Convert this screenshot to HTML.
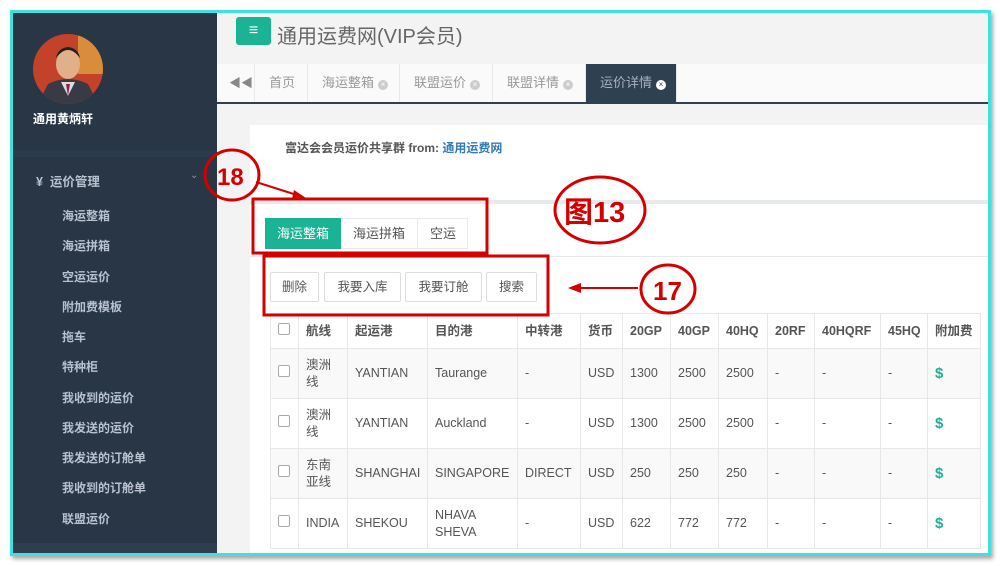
<!DOCTYPE html>
<html><head><meta charset="utf-8"><style>
*{margin:0;padding:0;box-sizing:border-box}
body{width:1000px;height:566px;background:#fff;position:relative;overflow:hidden;font-family:"Liberation Sans","Noto Sans CJK SC",sans-serif;font-size:12px;color:#676a6c}
.a{position:absolute}
.frame{left:10px;top:10px;width:981px;height:546px;border:3px solid #3ee0e0;box-shadow:2px 3px 4px rgba(0,0,0,.35)}
.side{left:13px;top:13px;width:204px;height:540px;background:#283646}
.menu{left:62px;color:#b8c1ce;font-weight:bold;font-size:12px}
.hdr{left:217px;top:13px;width:771px;height:51px;background:#f3f3f4}
.tabs{left:217px;top:64px;width:771px;height:40px;background:#fafafa;border-bottom:2px solid #2f4050}
.tab{position:absolute;top:0;height:38px;line-height:38px;border-right:1px solid #e7eaec;color:#999;font-size:13px;padding-left:14px}
.x{display:inline-block;width:10px;height:10px;border-radius:50%;background:#ccc;margin-left:4px;vertical-align:0px;color:#fff;font-size:8px;line-height:10px;text-align:center}
.content{left:217px;top:104px;width:771px;height:449px;background:#f3f3f4}
.btn{position:absolute;top:272px;height:30px;line-height:28px;border:1px solid #ddd;background:#fff;text-align:center;font-size:12.5px;color:#555;border-radius:2px}
table{border-collapse:collapse;position:absolute;left:270px;top:313px;width:710px;font-size:12.5px;color:#555;table-layout:fixed}
td,th{border:1px solid #e7e7e7;padding:0 7px;text-align:left;line-height:17px;white-space:nowrap;overflow:hidden}
td:nth-child(2){white-space:normal}
th{height:35px;font-weight:bold;color:#555}
tr.r td{height:50px}
tr.g td{background:#f9f9f9}
.cb{display:inline-block;width:12px;height:12px;border:1px solid #aaa;border-radius:2px;background:#fff}
.d{color:#1ab394;font-weight:bold;font-size:15px}
</style></head><body>
<div class="a side"></div>
<svg class="a" style="left:33px;top:34px" width="70" height="70"><defs><clipPath id="c"><circle cx="35" cy="35" r="35"/></clipPath></defs><g clip-path="url(#c)"><rect width="70" height="70" fill="#c4412a"/><rect x="45" y="0" width="25" height="40" fill="#d98c3a"/><path d="M5 70 L15 50 Q35 40 55 50 L65 70Z" fill="#3a3a44"/><path d="M28 48 L35 62 L42 48Z" fill="#ddd"/><path d="M33 50 L35 62 L37 50Z" fill="#8a2350"/><ellipse cx="35" cy="30" rx="12" ry="15" fill="#e0b08a"/><path d="M23 24 Q35 8 47 24 Q45 14 35 13 Q25 14 23 24Z" fill="#222"/></g></svg>
<div class="a" style="left:33px;top:110px;color:#fff;font-weight:bold;font-size:12px">通用黄炳轩</div>
<div class="a" style="left:13px;top:150px;width:204px;height:7px;background:#2c3b4b"></div>
<div class="a" style="left:36px;top:171px;color:#b8c1ce;font-weight:bold;font-size:12.5px">¥&nbsp;&nbsp;运价管理</div>
<div class="a" style="left:190px;top:170px;color:#8a95a5;font-size:10px">⌄</div>
<div class="a menu" style="top:207px">海运整箱</div>
<div class="a menu" style="top:237px">海运拼箱</div>
<div class="a menu" style="top:268px">空运运价</div>
<div class="a menu" style="top:298px">附加费模板</div>
<div class="a menu" style="top:328px">拖车</div>
<div class="a menu" style="top:358px">特种柜</div>
<div class="a menu" style="top:389px">我收到的运价</div>
<div class="a menu" style="top:419px">我发送的运价</div>
<div class="a menu" style="top:449px">我发送的订舱单</div>
<div class="a menu" style="top:479px">我收到的订舱单</div>
<div class="a menu" style="top:510px">联盟运价</div>
<div class="a" style="left:13px;top:543px;width:204px;height:10px;background:#2f3e4e"></div>

<div class="a hdr"></div>
<div class="a" style="left:236px;top:17px;width:35px;height:28px;background:#1ab394;border-radius:3px;color:#fff;text-align:center;line-height:28px;font-size:16px;font-weight:bold">≡</div>
<div class="a" style="left:277px;top:20px;font-size:20px;color:#666">通用运费网(VIP会员)</div>
<div class="a tabs">
<div class="tab" style="left:0;width:38px;padding-left:12px;color:#888;font-size:12px">◀◀</div>
<div class="tab" style="left:38px;width:53px">首页</div>
<div class="tab" style="left:91px;width:92px">海运整箱<span class="x">×</span></div>
<div class="tab" style="left:183px;width:93px">联盟运价<span class="x">×</span></div>
<div class="tab" style="left:276px;width:93px">联盟详情<span class="x">×</span></div>
<div class="tab" style="left:369px;width:91px;background:#2f4050;color:#a7b1c2">运价详情<span class="x" style="background:#fff;color:#2f4050">×</span></div>
</div>
<div class="a content"></div>
<div class="a" style="left:250px;top:125px;width:738px;height:428px;background:#fff"></div>
<div class="a" style="left:285px;top:139px;font-weight:bold;font-size:12px;color:#555">富达会会员运价共享群 from: <span style="color:#337ab7">通用运费网</span></div>
<div class="a" style="left:250px;top:200px;width:738px;height:4px;background:#e7eaec"></div>
<div class="a" style="left:265px;top:218px;width:203px;height:31px;border:1px solid #e7eaec"></div>
<div class="a" style="left:265px;top:218px;width:76px;height:31px;background:#1ab394;color:#fff;text-align:center;line-height:31px;font-size:13px">海运整箱</div>
<div class="a" style="left:341px;top:218px;width:77px;height:31px;border-right:1px solid #e7eaec;text-align:center;line-height:31px;font-size:13px;color:#555">海运拼箱</div>
<div class="a" style="left:418px;top:218px;width:50px;height:31px;text-align:center;line-height:31px;font-size:13px;color:#555">空运</div>
<div class="a" style="left:250px;top:256px;width:738px;height:1px;background:#e7eaec"></div>
<div class="btn" style="left:270px;width:49px">删除</div>
<div class="btn" style="left:324px;width:77px">我要入库</div>
<div class="btn" style="left:405px;width:77px">我要订舱</div>
<div class="btn" style="left:486px;width:51px">搜索</div>
<table>
<colgroup><col style="width:28px"><col style="width:49px"><col style="width:80px"><col style="width:90px"><col style="width:63px"><col style="width:42px"><col style="width:48px"><col style="width:48px"><col style="width:49px"><col style="width:47px"><col style="width:66px"><col style="width:47px"><col style="width:53px"></colgroup>
<tr><th><span class="cb"></span></th><th>航线</th><th>起运港</th><th>目的港</th><th>中转港</th><th>货币</th><th>20GP</th><th>40GP</th><th>40HQ</th><th>20RF</th><th>40HQRF</th><th>45HQ</th><th>附加费</th></tr>
<tr class="r g"><td><span class="cb"></span></td><td>澳洲<br>线</td><td>YANTIAN</td><td>Taurange</td><td>-</td><td>USD</td><td>1300</td><td>2500</td><td>2500</td><td>-</td><td>-</td><td>-</td><td class="d">$</td></tr>
<tr class="r"><td><span class="cb"></span></td><td>澳洲<br>线</td><td>YANTIAN</td><td>Auckland</td><td>-</td><td>USD</td><td>1300</td><td>2500</td><td>2500</td><td>-</td><td>-</td><td>-</td><td class="d">$</td></tr>
<tr class="r g"><td><span class="cb"></span></td><td>东南<br>亚线</td><td>SHANGHAI</td><td>SINGAPORE</td><td>DIRECT</td><td>USD</td><td>250</td><td>250</td><td>250</td><td>-</td><td>-</td><td>-</td><td class="d">$</td></tr>
<tr class="r"><td><span class="cb"></span></td><td>INDIA</td><td>SHEKOU</td><td style="white-space:normal">NHAVA<br>SHEVA</td><td>-</td><td>USD</td><td>622</td><td>772</td><td>772</td><td>-</td><td>-</td><td>-</td><td class="d">$</td></tr>
</table>
<div class="a" style="left:13px;top:553px;width:975px;height:3px;background:#3ee0e0"></div>

<svg class="a" style="left:0;top:0" width="1000" height="566">
<g fill="none" stroke="#d40000" stroke-width="3">
<rect x="253" y="199" width="234" height="54"/>
<rect x="264" y="256" width="284" height="59"/>
<ellipse cx="232" cy="175" rx="27" ry="25"/>
<ellipse cx="600" cy="210" rx="45" ry="33"/>
<ellipse cx="668" cy="289" rx="27" ry="24"/>
<line x1="256" y1="182" x2="300" y2="196" stroke-width="2"/>
<line x1="638" y1="288" x2="578" y2="288" stroke-width="2"/>
</g>
<path d="M306 198 L294 190 L292 199Z" fill="#d40000"/>
<path d="M568 288 L581 283 L581 293Z" fill="#d40000"/>
<text x="217" y="185" font-family="Liberation Sans" font-weight="bold" font-size="24" fill="#d40000">18</text>
<text x="564" y="222" font-family="Liberation Sans,Noto Sans CJK SC,sans-serif" font-weight="bold" font-size="29" fill="#d40000">图13</text>
<text x="653" y="300" font-family="Liberation Sans" font-weight="bold" font-size="26" fill="#d40000">17</text>
</svg>
<div class="a frame"></div>
</body></html>
